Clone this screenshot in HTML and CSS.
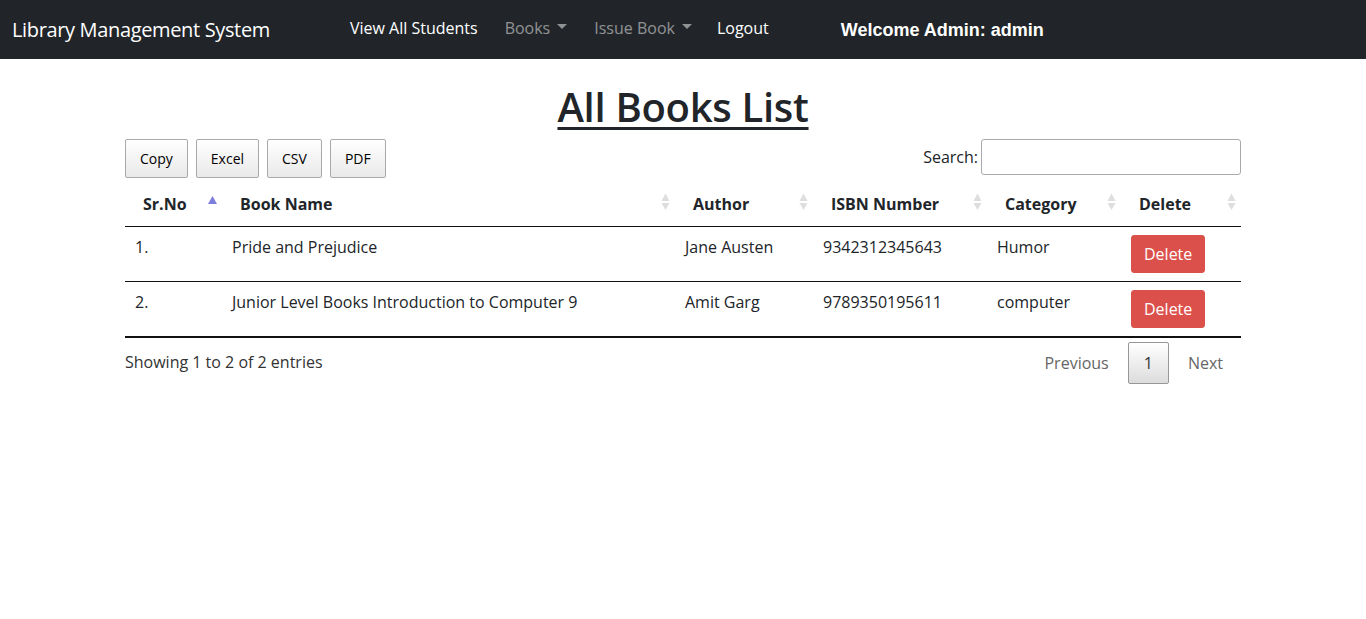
FILE: index.html
```html
<!DOCTYPE html>
<html lang="en">
<head>
<meta charset="utf-8">
<title>All Books List</title>
<link rel="stylesheet" href="styles.css">
</head>
<body>
<nav class="navbar">
  <a class="brand" href="#">Library Management System</a>
  <ul class="nav">
    <li><a class="nav-link active" href="#">View All Students</a></li>
    <li><a class="nav-link muted" href="#">Books<span class="caret"></span></a></li>
    <li><a class="nav-link muted" href="#">Issue Book<span class="caret"></span></a></li>
    <li><a class="nav-link active" href="#">Logout</a></li>
  </ul>
  <span class="welcome">Welcome Admin: admin</span>
</nav>

<main class="container">
  <h1 class="title">All Books List</h1>

  <div class="toolbar">
    <div class="dt-buttons">
      <button class="dt-btn">Copy</button>
      <button class="dt-btn">Excel</button>
      <button class="dt-btn">CSV</button>
      <button class="dt-btn">PDF</button>
    </div>
    <label class="search">Search:<input type="search" class="search-input"></label>
  </div>

  <table class="data-table">
    <thead>
      <tr>
        <th class="c1">Sr.No<svg class="sort asc" viewBox="0 0 9 8" width="9" height="8"><path d="M0 8 L4.5 0 L9 8 Z" fill="#7d7ddc"/></svg></th>
        <th class="c2">Book Name<svg class="sort" viewBox="0 0 9 17" width="9" height="17"><path d="M0.5 8 L4.5 0.5 L8.5 8 Z M0.5 10 L4.5 17 L8.5 10 Z" fill="#dedede"/></svg></th>
        <th class="c3">Author<svg class="sort" viewBox="0 0 9 17" width="9" height="17"><path d="M0.5 8 L4.5 0.5 L8.5 8 Z M0.5 10 L4.5 17 L8.5 10 Z" fill="#dedede"/></svg></th>
        <th class="c4">ISBN Number<svg class="sort" viewBox="0 0 9 17" width="9" height="17"><path d="M0.5 8 L4.5 0.5 L8.5 8 Z M0.5 10 L4.5 17 L8.5 10 Z" fill="#dedede"/></svg></th>
        <th class="c5">Category<svg class="sort" viewBox="0 0 9 17" width="9" height="17"><path d="M0.5 8 L4.5 0.5 L8.5 8 Z M0.5 10 L4.5 17 L8.5 10 Z" fill="#dedede"/></svg></th>
        <th class="c6">Delete<svg class="sort" viewBox="0 0 9 17" width="9" height="17"><path d="M0.5 8 L4.5 0.5 L8.5 8 Z M0.5 10 L4.5 17 L8.5 10 Z" fill="#dedede"/></svg></th>
      </tr>
    </thead>
    <tbody>
      <tr>
        <td>1.</td>
        <td>Pride and Prejudice</td>
        <td>Jane Austen</td>
        <td>9342312345643</td>
        <td>Humor</td>
        <td><button class="btn-danger">Delete</button></td>
      </tr>
      <tr>
        <td>2.</td>
        <td>Junior Level Books Introduction to Computer 9</td>
        <td>Amit Garg</td>
        <td>9789350195611</td>
        <td>computer</td>
        <td><button class="btn-danger">Delete</button></td>
      </tr>
    </tbody>
  </table>

  <div class="table-footer">
    <div class="info">Showing 1 to 2 of 2 entries</div>
    <div class="paginate">
      <a class="page-btn disabled" href="#">Previous</a>
      <a class="page-btn current" href="#">1</a>
      <a class="page-btn disabled" href="#">Next</a>
    </div>
  </div>
</main>
</body>
</html>
```

FILE: styles.css
```css
* { box-sizing: border-box; }

html, body {
  margin: 0;
  padding: 0;
}

body {
  font-family: "Open Sans", "Noto Sans", sans-serif;
  font-size: 16px;
  line-height: 24px;
  color: #212529;
  background: #fff;
}

a { text-decoration: none; }

.navbar {
  display: flex;
  align-items: center;
  height: 59px;
  background: #212529;
  padding: 0 12px;
}

.brand {
  color: #fff;
  font-size: 20px;
  line-height: 30px;
  letter-spacing: -0.35px;
  margin-top: 1px;
}

.nav {
  display: flex;
  list-style: none;
  margin: 0 0 0 80px;
  padding: 0;
  gap: 27px;
}

.nav li:last-child { margin-left: -2px; }

.nav-link {
  display: flex;
  align-items: center;
  font-size: 16px;
  line-height: 24px;
  margin-top: -4px;
}

.nav-link.active { color: #fff; }
.nav-link.muted { color: rgba(255, 255, 255, 0.5); }

.caret {
  display: inline-block;
  margin-left: 7px;
  border-top: 5px solid rgba(255, 255, 255, 0.5);
  border-left: 5px solid transparent;
  border-right: 5px solid transparent;
  margin-top: -2px;
}

.welcome {
  color: #fff;
  font-family: "Liberation Sans", Arial, sans-serif;
  font-weight: bold;
  font-size: 18px;
  margin-left: 72px;
}

.container {
  width: 1116px;
  margin: 0 auto;
}

.title {
  text-align: center;
  font-size: 40px;
  font-weight: 600;
  line-height: 48px;
  letter-spacing: -0.3px;
  text-decoration: underline;
  text-decoration-thickness: 3px;
  text-underline-offset: 5px;
  margin: 24px 0 8px 0;
}

.toolbar {
  display: flex;
  justify-content: space-between;
  align-items: flex-start;
}

.dt-buttons {
  display: flex;
  gap: 8px;
}

.dt-btn {
  font-family: inherit;
  font-size: 14px;
  line-height: 17px;
  color: #000;
  height: 39px;
  padding: 0 14px;
  border: 1px solid #a9a9a9;
  border-radius: 2px;
  background: linear-gradient(to bottom, #fff 0%, #e9e9e9 100%);
}

.search {
  display: flex;
  align-items: center;
  font-size: 16px;
}

.search-input {
  width: 260px;
  height: 36px;
  margin-left: 3px;
  border: 1px solid #aaa;
  border-radius: 3px;
  padding: 4px;
  font-family: inherit;
}

.data-table {
  width: 100%;
  border-collapse: collapse;
  table-layout: fixed;
  margin-top: 4px;
}

.data-table th {
  position: relative;
  text-align: left;
  font-weight: bold;
  padding: 10px 18px;
  border-bottom: 1px solid #111;
  white-space: nowrap;
}

.data-table .c1 { width: 97px; }
.data-table .c2 { width: 453px; }
.data-table .c3 { width: 138px; }
.data-table .c4 { width: 174px; }
.data-table .c5 { width: 134px; }
.data-table .c6 { width: 120px; }

.sort {
  position: absolute;
  right: 5px;
  top: 11px;
}

.sort.asc { top: 14px; }

.data-table td {
  padding: 8px 10px;
  vertical-align: top;
  border-top: 1px solid #111;
}

.data-table tbody tr:first-child td { border-top: none; }

.data-table tbody tr:last-child td { border-bottom: 2px solid #111; }

.btn-danger {
  display: block;
  font-family: inherit;
  font-size: 16px;
  line-height: 24px;
  color: #fff;
  background: #dc504b;
  border: 1px solid #dc504b;
  border-radius: 3px;
  padding: 6px 12px;
}

.table-footer {
  display: flex;
  justify-content: space-between;
  align-items: flex-start;
  margin-top: 2px;
}

.info {
  padding-top: 10px;
  color: #333;
}

.paginate {
  display: flex;
  align-items: center;
  gap: 2px;
  padding-top: 2px;
  margin-right: 1px;
}

.page-btn {
  display: block;
  padding: 9px 16px;
  border: 1px solid transparent;
  border-radius: 2px;
  color: #666;
  line-height: 22px;
}

.page-btn.current {
  color: #333;
  border: 1px solid #979797;
  background: linear-gradient(to bottom, #fff 0%, #dcdcdc 100%);
  padding: 9px 15px;
}
```
